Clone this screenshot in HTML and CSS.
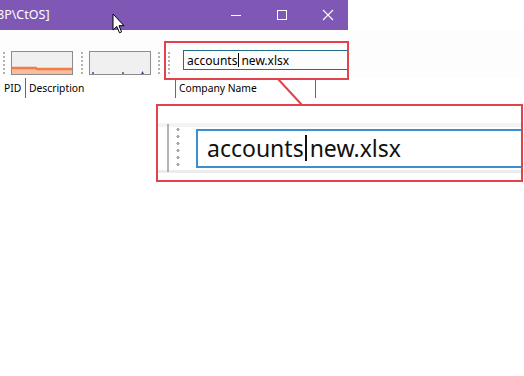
FILE: index.html
```html
<!DOCTYPE html>
<html>
<head>
<meta charset="utf-8">
<link rel="stylesheet" href="styles.css">
</head>
<body>
<div class="window">
  <div class="titlebar">
    <span class="title">8P\CtOS]</span>
    <div class="controls">
      <span class="ctl"><svg width="12" height="12" viewBox="0 0 12 12"><line x1="1" y1="6.5" x2="11" y2="6.5" stroke="#fff" stroke-width="1"/></svg></span>
      <span class="ctl"><svg width="12" height="12" viewBox="0 0 12 12"><rect x="1.5" y="1.5" width="9" height="9" fill="none" stroke="#fff" stroke-width="1"/></svg></span>
      <span class="ctl"><svg width="12" height="12" viewBox="0 0 12 12"><path d="M1 1 L11 11 M11 1 L1 11" stroke="#fff" stroke-width="1.1"/></svg></span>
    </div>
  </div>
  <div class="toolbar">
    <span class="grip"></span>
    <div class="graph g1">
      <svg width="60" height="22" viewBox="0 0 60 22"><path d="M0 16 L24 16 L25 17 L60 17 L60 22 L0 22 Z" fill="#fbbd9b"/><path d="M0 16 L24 16 L25 17 L60 17" fill="none" stroke="#ef7d4a" stroke-width="2.4"/></svg>
    </div>
    <span class="grip g-mid"></span>
    <div class="graph g2">
      <svg width="60" height="22" viewBox="0 0 60 22"><circle cx="3" cy="21" r="1" fill="#3b4aa0"/><circle cx="33" cy="21" r="1" fill="#3b4aa0"/><path d="M51 22 L52.5 19 L54 22 Z" fill="#3b4aa0"/></svg>
    </div>
    <span class="grip g-mid2"></span>
    <span class="grip g-search"></span>
    <div class="search"><span>accounts</span><span class="caret"></span><span>new.xlsx</span></div>
  </div>
  <div class="headers">
    <span class="col c-pid">PID</span>
    <span class="col c-desc">Description</span>
    <span class="col c-comp">Company Name</span>
  </div>
</div>

<div class="hl-small"></div>
<svg class="connector" width="40" height="32" viewBox="0 0 40 32"><line x1="2" y1="1" x2="26" y2="27" stroke="#e0434c" stroke-width="2"/></svg>
<div class="callout">
  <div class="zoombar">
    <span class="zsep"></span>
    <span class="zgrip"></span>
    <div class="zsearch"><span>accounts</span><span class="zcaret"></span><span>new.xlsx</span></div>
  </div>
</div>

<svg class="cursor" width="14" height="22" viewBox="0 0 14 22"><path d="M1 1 L1 17 L4.8 13.5 L7.5 19.8 L9.6 18.9 L7 12.7 L12 12.7 Z" fill="#fff" stroke="#000" stroke-width="1" stroke-linejoin="round"/></svg>
</body>
</html>
```

FILE: styles.css
```css
html, body {
  margin: 0;
  padding: 0;
  background: #ffffff;
  width: 524px;
  height: 376px;
  overflow: hidden;
  font-family: "Noto Sans", "Open Sans", sans-serif;
}
body { position: relative; }

.window { width: 524px; }

.titlebar {
  width: 348px;
  height: 30px;
  background: #7f58b6;
  display: flex;
  align-items: center;
  justify-content: space-between;
  color: #fff;
}
.title {
  font-size: 12.5px;
  margin-left: -3px;
  padding-bottom: 1px;
}
.controls { display: flex; height: 30px; margin-right: -3px; }
.ctl {
  width: 46px;
  height: 30px;
  display: flex;
  align-items: center;
  justify-content: center;
}

.toolbar {
  height: 27px;
  padding-top: 21px;
  display: flex;
  align-items: flex-start;
  background: #fdfdfd;
}
.grip {
  width: 2px;
  height: 24px;
  background-image: radial-gradient(circle, #b3b3b3 0.8px, transparent 1px);
  background-size: 2px 4px;
  margin-left: 3px;
}
.graph {
  width: 60px;
  height: 22px;
  border: 1px solid #8c8c8c;
  background: #f0f0f0;
  margin-left: 6px;
}
.graph svg { display: block; }
.g-mid { margin-left: 8px; }
.g2 { margin-left: 6px; }
.g-mid2 { margin-left: 7px; }
.g-search { margin-left: 8px; }
.search {
  margin-left: 13px;
  margin-top: -1px;
  flex: none;
  width: 160px;
  height: 18px;
  border: 1px solid #1f6e8c;
  display: flex;
  align-items: center;
  padding-left: 3px;
  font-size: 12px;
  color: #000;
  white-space: nowrap;
}
.caret {
  width: 1px;
  height: 14px;
  background: #000;
  margin: 0 2px 0 1px;
}

.headers {
  height: 19px;
  padding-bottom: 2px;
  display: flex;
  align-items: center;
  font-size: 10.3px;
  color: #000;
}
.col {
  height: 20px;
  display: flex;
  align-items: center;
  white-space: nowrap;
  box-sizing: border-box;
}
.c-pid { width: 26px; padding-left: 4px; border-right: 1px solid #6a6a6a; }
.c-desc { width: 150px; padding-left: 3px; border-right: 1px solid #6a6a6a; }
.c-comp { width: 140px; padding-left: 3px; border-right: 1px solid #6a6a6a; }

.hl-small {
  position: absolute;
  left: 164px;
  top: 41px;
  width: 181px;
  height: 35px;
  border: 2px solid #e0434c;
}
.connector {
  position: absolute;
  left: 276px;
  top: 78px;
}
.callout {
  position: absolute;
  left: 156px;
  top: 104px;
  width: 363px;
  height: 74px;
  border: 2px solid #e0434c;
  background: #fff;
  overflow: hidden;
}
.zoombar {
  margin-top: 17px;
  height: 50px;
  display: flex;
  align-items: center;
  background: linear-gradient(#f3f3f5 0 4px, #fff 4px calc(100% - 3px), #ececee calc(100% - 3px));
}
.zsep {
  flex: none;
  width: 2px;
  height: 48px;
  background: #b4b4b4;
  margin-left: 9px;
}
.zgrip {
  flex: none;
  width: 4px;
  height: 44px;
  background-image: radial-gradient(circle, #a8a8a8 1.4px, transparent 1.8px);
  background-size: 4px 7px;
  margin-left: 7px;
}
.zsearch {
  margin-left: 16px;
  flex: none;
  width: 360px;
  height: 35px;
  border: 2px solid #3b8fd0;
  display: flex;
  align-items: center;
  padding-left: 9px;
  font-size: 23px;
  color: #111;
  white-space: nowrap;
}
.zcaret {
  width: 2px;
  height: 26px;
  background: #111;
  margin: 0 3px 0 1px;
}

.cursor {
  position: absolute;
  left: 112px;
  top: 13px;
}
```
